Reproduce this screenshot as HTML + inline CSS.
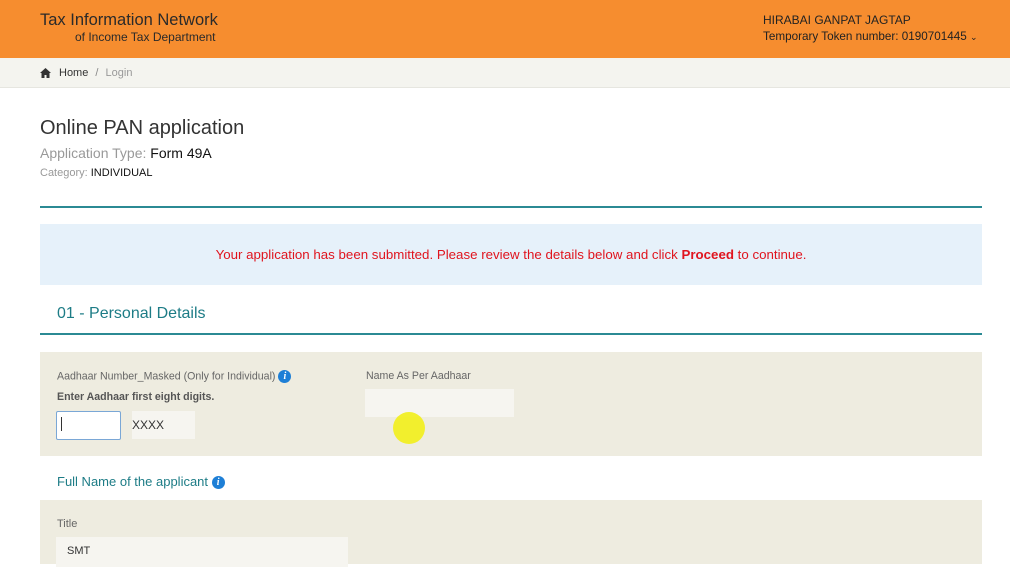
<!DOCTYPE html>
<html><head><style>
body{margin:0;width:1010px;height:564px;overflow:hidden;background:#fff;font-family:"Liberation Sans",sans-serif;position:relative}
.a{position:absolute}
.info{display:inline-block;width:13px;height:13px;border-radius:50%;background:#1e7fd6;color:#fff;font:bold italic 10px "Liberation Serif",serif;text-align:center;line-height:13px;vertical-align:middle}
</style></head><body>
<div class="a" style="left:0;top:0;width:1010px;height:58px;background:#f68d2f"></div>
<div class="a" style="left:40px;top:11px;font-size:16.5px;color:#2a2a2a">Tax Information Network</div>
<div class="a" style="left:75px;top:30px;font-size:12px;color:#2a2a2a">of Income Tax Department</div>
<div class="a" style="left:763px;top:13px;font-size:12px;color:#222">HIRABAI GANPAT JAGTAP</div>
<div class="a" style="left:763px;top:30px;font-size:11.7px;color:#222">Temporary Token number: 0190701445 <span style="font-size:9px">&#8964;</span></div>
<div class="a" style="left:0;top:58px;width:1010px;height:29px;background:#f4f4ef;border-bottom:1px solid #e6e6e0"></div>
<svg class="a" style="left:40px;top:68px" width="11" height="10" viewBox="0 0 11 10"><path d="M5.5 0L0 5h1.5v5h3V7h2v3h3V5H11z" fill="#333"/></svg>
<div class="a" style="left:59px;top:67px;font-size:11px;color:#333">Home <span style="color:#888;margin:0 4px">/</span> <span style="color:#999">Login</span></div>
<div class="a" style="left:40px;top:117px;font-size:20px;color:#333">Online PAN application</div>
<div class="a" style="left:40px;top:145px;font-size:14px;color:#999">Application Type: <span style="color:#111">Form 49A</span></div>
<div class="a" style="left:40px;top:167px;font-size:11px;color:#999">Category: <span style="color:#111">INDIVIDUAL</span></div>
<div class="a" style="left:40px;top:206px;width:942px;height:2px;background:#2b8a94"></div>
<div class="a" style="left:40px;top:224px;width:942px;height:61px;background:#e6f1fa"></div>
<div class="a" style="left:40px;top:247px;width:942px;text-align:center;font-size:13.3px;color:#e0141e">Your application has been submitted. Please review the details below and click <b>Proceed</b> to continue.</div>
<div class="a" style="left:57px;top:305px;font-size:16px;color:#1d7c86">01 - Personal Details</div>
<div class="a" style="left:40px;top:333px;width:942px;height:2px;background:#2b8a94"></div>
<div class="a" style="left:40px;top:352px;width:942px;height:104px;background:#eeece0"></div>
<div class="a" style="left:57px;top:370px;font-size:10.6px;color:#666">Aadhaar Number_Masked (Only for Individual) <span class="info">i</span></div>
<div class="a" style="left:57px;top:391px;font-size:10.6px;color:#555;font-weight:bold">Enter Aadhaar first eight digits.</div>
<div class="a" style="left:56px;top:411px;width:63px;height:27px;background:#fff;border:1px solid #7aa7d6;border-radius:2px"></div>
<div class="a" style="left:61px;top:417px;width:1px;height:14px;background:#333"></div>
<div class="a" style="left:132px;top:411px;width:63px;height:28px;background:#f6f5f0"></div>
<div class="a" style="left:132px;top:418px;font-size:12px;color:#333">XXXX</div>
<div class="a" style="left:366px;top:370px;font-size:10.6px;color:#666">Name As Per Aadhaar</div>
<div class="a" style="left:365px;top:389px;width:149px;height:28px;background:#f6f5f0"></div>
<div class="a" style="left:393px;top:412px;width:32px;height:32px;border-radius:50%;background:#f2f01a;opacity:.9"></div>
<div class="a" style="left:57px;top:474px;font-size:13px;color:#1d7c86">Full Name of the applicant <span class="info">i</span></div>
<div class="a" style="left:40px;top:500px;width:942px;height:64px;background:#eeece0"></div>
<div class="a" style="left:57px;top:518px;font-size:11px;color:#666">Title</div>
<div class="a" style="left:56px;top:537px;width:292px;height:30px;background:#f6f5f0"></div>
<div class="a" style="left:67px;top:545px;font-size:11px;color:#333">SMT</div>
</body></html>
